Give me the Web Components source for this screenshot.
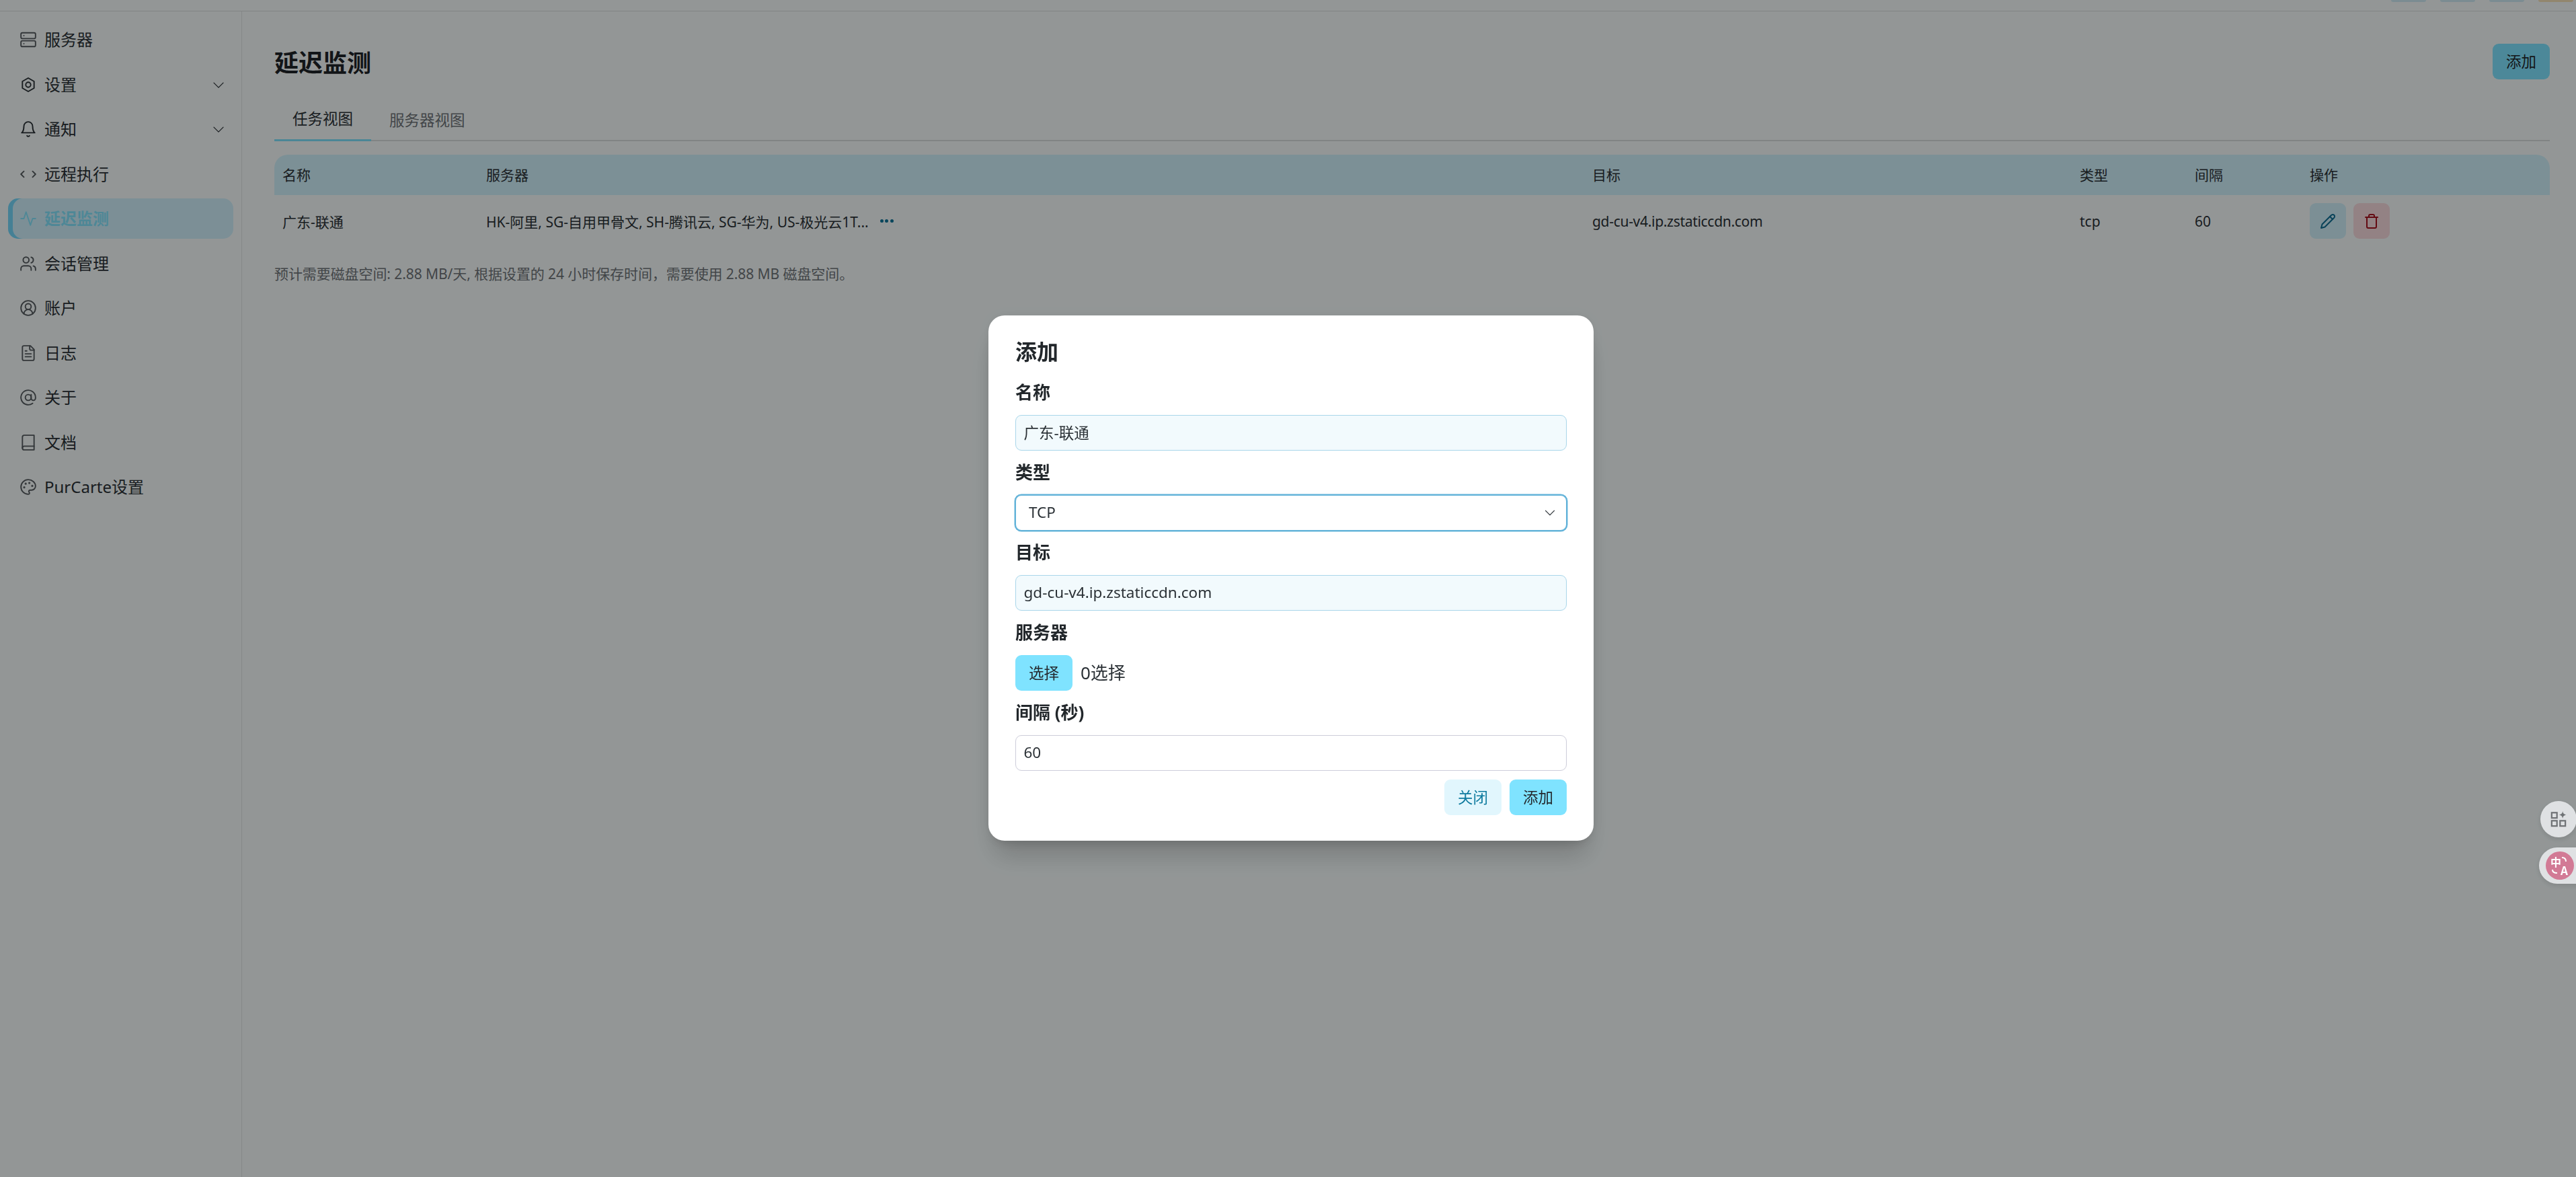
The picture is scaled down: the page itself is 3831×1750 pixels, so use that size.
<!DOCTYPE html>
<html lang="zh-CN">
<head>
<meta charset="UTF-8"/>
<title>延迟监测</title>
<style>
    html, body { margin: 0; height: 100%; }
    body {
        background: #f5fbfb;
        color: #2b3136;
        font-family: "Noto Sans", "Noto Sans CJK SC", sans-serif;
        overflow: hidden;
    }
</style>
</head>
<body>

<app-shell>
    <side-nav slot="nav">
        <nav-item icon="server">服务器</nav-item>
        <nav-item icon="settings" arrow>设置</nav-item>
        <nav-item icon="bell" arrow>通知</nav-item>
        <nav-item icon="code">远程执行</nav-item>
        <nav-item icon="activity" active>延迟监测</nav-item>
        <nav-item icon="users">会话管理</nav-item>
        <nav-item icon="user">账户</nav-item>
        <nav-item icon="file">日志</nav-item>
        <nav-item icon="at">关于</nav-item>
        <nav-item icon="book">文档</nav-item>
        <nav-item icon="palette">PurCarte设置</nav-item>
    </side-nav>
    <latency-page></latency-page>
</app-shell>

<modal-overlay>
    <add-dialog></add-dialog>
</modal-overlay>

<float-widgets></float-widgets>

<script>
    // Icons, mostly lucide shapes
    const ICONS = {
        server: '<rect x="2" y="2.5" width="20" height="8" rx="2"/><rect x="2" y="13.5" width="20" height="8" rx="2"/><path d="M6 6.5h.01M6 17.5h.01"/>',
        settings: '<path d="M12 2.8 20 7.4v9.2l-8 4.6-8-4.6V7.4z"/><circle cx="12" cy="12" r="3.4"/>',
        bell: '<path d="M6 8a6 6 0 0 1 12 0c0 7 3 9 3 9H3s3-2 3-9"/><path d="M10.3 21a1.94 1.94 0 0 0 3.4 0"/>',
        code: '<path d="m18 16 4-4-4-4"/><path d="m6 8-4 4 4 4"/>',
        activity: '<path d="M22 12h-4l-3 9L9 3l-3 9H2"/>',
        users: '<path d="M16 21v-2a4 4 0 0 0-4-4H6a4 4 0 0 0-4 4v2"/><circle cx="9" cy="7" r="4"/><path d="M22 21v-2a4 4 0 0 0-3-3.87"/><path d="M16 3.13a4 4 0 0 1 0 7.75"/>',
        user: '<circle cx="12" cy="12" r="10"/><circle cx="12" cy="10" r="4"/><path d="M18 20a6 6 0 0 0-12 0"/>',
        file: '<path d="M15 2H6a2 2 0 0 0-2 2v16a2 2 0 0 0 2 2h12a2 2 0 0 0 2-2V7Z"/><path d="M14 2v4a2 2 0 0 0 2 2h4"/><path d="M10 9H8M16 13H8M16 17H8"/>',
        at: '<circle cx="12" cy="12" r="4"/><path d="M16 8v5a3 3 0 0 0 6 0v-1a10 10 0 1 0-4 8"/>',
        book: '<path d="M4 19.5v-15A2.5 2.5 0 0 1 6.5 2H20v20H6.5a2.5 2.5 0 0 1-2.5-2.5z"/><path d="M4 19.5A2.5 2.5 0 0 1 6.5 17H20"/>',
        palette: '<path d="M12 2C6.5 2 2 6.5 2 12s4.5 10 10 10c.926 0 1.648-.746 1.648-1.688 0-.437-.18-.835-.437-1.125-.29-.289-.438-.652-.438-1.125a1.64 1.64 0 0 1 1.668-1.668h1.996c3.051 0 5.555-2.503 5.555-5.554C21.965 6.012 17.461 2 12 2z"/><circle cx="13.5" cy="6.5" r=".6"/><circle cx="17.5" cy="10.5" r=".6"/><circle cx="8.5" cy="7.5" r=".6"/><circle cx="6.5" cy="12.5" r=".6"/>',
        chevron: '<path d="m6 9.5 6 6 6-6"/>',
        pencil: '<path d="M17 3a2.85 2.83 0 1 1 4 4L7.5 20.5 2 22l1.5-5.5Z"/><path d="m15 5 4 4"/>',
        trash: '<path d="M3 6h18"/><path d="M19 6v14c0 1-1 2-2 2H7c-1 0-2-1-2-2V6"/><path d="M8 6V4c0-1 1-2 2-2h4c1 0 2 1 2 2v2"/>'
    };

    // every element here is just a shadow root filled from a string
    function generateElement(tagName, html) {
        window.customElements.define(tagName, class extends HTMLElement {
            constructor() {
                super();
                this.attachShadow({ mode: 'open' }).innerHTML = html;
            }
        });
    }

    window.customElements.define('ui-icon', class extends HTMLElement {
        constructor() {
            super();
            this.attachShadow({ mode: 'open' });
        }
        connectedCallback() {
            const size = this.getAttribute('size') || 26;
            const width = this.getAttribute('stroke') || 1.75;
            this.shadowRoot.innerHTML = `
                <style>:host { display: inline-flex; flex: none; } svg { display: block; }</style>
                <svg width="${size}" height="${size}" viewBox="0 0 24 24" fill="none" stroke="currentColor"
                     stroke-width="${width}" stroke-linecap="round" stroke-linejoin="round">${ICONS[this.getAttribute('name')]}</svg>`;
        }
    });

    generateElement('app-shell', `
        <style>
            :host { display: flex; flex-direction: column; height: 1750px; }
            .top {
                height: 17px; box-sizing: border-box; flex: none;
                border-bottom: 1.5px solid #d8dcdd;
                display: flex; justify-content: flex-end; gap: 21px; padding-right: 4px;
            }
            .chip { width: 52px; height: 3px; border-radius: 0 0 10px 10px; background: #cdeaf4; }
            .chip.user { background: #f3dfb8; }
            .body { flex: 1; display: flex; min-height: 0; }
        </style>
        <div class="top">
            <div class="chip"></div><div class="chip"></div><div class="chip"></div><div class="chip user"></div>
        </div>
        <div class="body">
            <slot name="nav"></slot>
            <slot></slot>
        </div>`);

    generateElement('side-nav', `
        <style>
            :host {
                display: flex; flex-direction: column; gap: 6.5px; flex: none;
                width: 360px; box-sizing: border-box;
                padding: 12px 12px 0 12px;
                border-right: 1.5px solid #dfe3e4;
            }
        </style>
        <slot></slot>`);

    window.customElements.define('nav-item', class extends HTMLElement {
        constructor() {
            super();
            this.attachShadow({ mode: 'open' });
        }
        connectedCallback() {
            const arrow = this.hasAttribute('arrow')
                ? '<ui-icon class="arrow" name="chevron" size="28" stroke="1.1"></ui-icon>' : '';
            this.shadowRoot.innerHTML = `
                <style>
                    :host {
                        display: flex; align-items: center; height: 60px; box-sizing: border-box;
                        padding: 0 8px 0 17px; gap: 11px; border-radius: 15px;
                        font-size: 24px; color: #2b3136;
                    }
                    :host([active]) {
                        background: #cfeffb; color: #82e2fb; font-weight: 700;
                        box-shadow: inset 7px 0 0 #74d6f8;
                    }
                    ui-icon { color: #555b5f; }
                    :host([active]) ui-icon { color: #82e2fb; }
                    :host([icon="settings"]) ui-icon, :host([icon="bell"]) ui-icon { color: #2b3136; }
                    .label { flex: 1; padding-bottom: 3px; }
                    ui-icon.arrow { color: #2b3136; }
                </style>
                <ui-icon name="${this.getAttribute('icon')}"></ui-icon>
                <span class="label"><slot></slot></span>
                ${arrow}`;
        }
    });

    generateElement('ui-button', `
        <style>
            :host {
                display: inline-flex; align-items: center; justify-content: center; flex: none;
                width: 85px; height: 53px; box-sizing: border-box; padding-bottom: 2px;
                border-radius: 9px; font-size: 22.5px; color: #24292d;
                background: #7fe3ff;
            }
            :host([soft]) { background: #e1f6fd; color: #0d7a9e; }
        </style>
        <slot></slot>`);

    generateElement('tab-bar', `
        <style>
            :host {
                display: flex; height: 62px; box-sizing: border-box; margin-top: 30px;
                border-bottom: 2px solid #d7dcdd;
            }
            .tab {
                display: flex; align-items: center; height: 62px; box-sizing: border-box;
                padding: 0 27px 4px; font-size: 22.5px; color: #6f7478;
            }
            .on { color: #2b3136; border-bottom: 3px solid #7ee0fb; }
        </style>
        <div class="tab on">任务视图</div>
        <div class="tab">服务器视图</div>`);

    generateElement('task-table', `
        <style>
            :host { display: block; margin-top: 20px; font-size: 21px; color: #2b3136; }
            table { width: 100%; border-collapse: collapse; table-layout: fixed; }
            th, td { padding: 0 12px; text-align: left; font-weight: 400; white-space: nowrap; }
            th { padding-bottom: 3px; }
            thead tr { height: 60px; background: #cff0fb; }
            th:first-child { border-top-left-radius: 20px; }
            th:last-child { border-top-right-radius: 20px; }
            tbody tr { height: 77px; }
            .target { letter-spacing: -.3px; }
            .servers { display: flex; align-items: center; gap: 17px; }
            .dots { display: flex; gap: 2.5px; }
            .dots i { width: 5px; height: 5px; border-radius: 50%; background: #10759a; }
            .acts { display: flex; gap: 11px; }
            .act {
                width: 54px; height: 53px; border-radius: 9px;
                display: flex; align-items: center; justify-content: center;
            }
            .edit { background: #cfeef8; color: #0f6f94; }
            .del { background: #f6d9dc; color: #a5121f; }
        </style>
        <table>
            <colgroup>
                <col style="width:303px"><col style="width:1645px"><col style="width:725px">
                <col style="width:171px"><col style="width:171px"><col>
            </colgroup>
            <thead>
                <tr><th>名称</th><th>服务器</th><th>目标</th><th>类型</th><th>间隔</th><th>操作</th></tr>
            </thead>
            <tbody>
                <tr>
                    <td>广东-联通</td>
                    <td><div class="servers">
                        <span>HK-阿里, SG-自用甲骨文, SH-腾讯云, SG-华为, US-极光云1T...</span>
                        <span class="dots"><i></i><i></i><i></i></span>
                    </div></td>
                    <td class="target">gd-cu-v4.ip.zstaticcdn.com</td>
                    <td>tcp</td>
                    <td>60</td>
                    <td><div class="acts">
                        <div class="act edit"><ui-icon name="pencil" size="24" stroke="2"></ui-icon></div>
                        <div class="act del"><ui-icon name="trash" size="24" stroke="2"></ui-icon></div>
                    </div></td>
                </tr>
            </tbody>
        </table>`);

    generateElement('latency-page', `
        <style>
            :host {
                display: block; flex: 1; min-width: 0;
                padding: 48px 39px 0 48px;
            }
            .head { display: flex; align-items: center; justify-content: space-between; height: 53px; }
            h1 { margin: 0; font-size: 36px; font-weight: 700; color: #1f2428; line-height: 53px; position: relative; top: 2px; }
            p { margin: 24px 0 0; font-size: 21px; line-height: 32px; color: #6f7478; letter-spacing: -.08px; }
        </style>
        <div class="head">
            <h1>延迟监测</h1>
            <ui-button>添加</ui-button>
        </div>
        <tab-bar></tab-bar>
        <task-table></task-table>
        <p>预计需要磁盘空间: 2.88 MB/天, 根据设置的 24 小时保存时间，需要使用 2.88 MB 磁盘空间。</p>`);

    generateElement('modal-overlay', `
        <style>
            :host {
                position: fixed; inset: 0; display: flex; justify-content: center; align-items: flex-start;
                padding: 469px 0 0 9px; box-sizing: border-box;
                background: rgba(0, 0, 0, .4);
            }
        </style>
        <slot></slot>`);

    window.customElements.define('field-label', class extends HTMLElement {
        constructor() {
            super();
            this.attachShadow({ mode: 'open' }).innerHTML = `
                <style>
                    :host { display: block; height: 36px; font-size: 26px; font-weight: 700; line-height: 34px; color: #22272b; }
                </style>
                <slot></slot>`;
        }
    });

    generateElement('text-box', `
        <style>
            :host {
                display: flex; align-items: center; height: 53px; box-sizing: border-box;
                padding: 0 11.5px 2px; border-radius: 9px; font-size: 22.5px; color: #2b3136;
                background: #fff; border: 1.5px solid #cdcdda;
            }
            :host([filled]) { background: #f2fafd; border-color: #a9d6ea; }
        </style>
        <slot></slot>`);

    generateElement('select-box', `
        <style>
            :host {
                display: flex; align-items: center; justify-content: space-between;
                height: 53px; box-sizing: border-box; padding: 0 11px 2px 19px;
                border-radius: 9px; font-size: 22.5px; color: #2b3136;
                background: #fff; border: 1.5px solid #63b3d9; box-shadow: 0 0 0 1.5px #63b3d9;
            }
            ui-icon { color: #3c4246; }
        </style>
        <slot></slot>
        <ui-icon name="chevron" size="26" stroke="1.1"></ui-icon>`);

    generateElement('add-dialog', `
        <style>
            :host {
                display: flex; flex-direction: column; width: 900px; height: 781px; box-sizing: border-box;
                padding: 34px 40px 0; border-radius: 24px; background: #fff;
                box-shadow: 0 30px 38px -8px rgba(0,0,0,.18), 0 12px 15px -8px rgba(0,0,0,.1), 0 0 24px rgba(0,0,0,.06);
            }
            h2 { margin: 0 0 23px; font-size: 32px; line-height: 40px; font-weight: 700; color: #22272b; }
            .stack { display: flex; flex-direction: column; gap: 15px; }
            .pick { display: flex; align-items: center; gap: 12px; font-size: 26px; color: #2b3136; }
            .pick span { padding-bottom: 3px; }
            .foot { display: flex; justify-content: flex-end; gap: 12px; margin-top: 13px; }
        </style>
        <h2>添加</h2>
        <div class="stack">
            <field-label>名称</field-label>
            <text-box filled>广东-联通</text-box>
            <field-label>类型</field-label>
            <select-box>TCP</select-box>
            <field-label>目标</field-label>
            <text-box filled>gd-cu-v4.ip.zstaticcdn.com</text-box>
            <field-label>服务器</field-label>
            <div class="pick"><ui-button>选择</ui-button><span>0选择</span></div>
            <field-label>间隔 (秒)</field-label>
            <text-box>60</text-box>
        </div>
        <div class="foot">
            <ui-button soft>关闭</ui-button>
            <ui-button>添加</ui-button>
        </div>`);

    // browser extension buttons, they sit above the dimmed layer
    generateElement('float-widgets', `
        <style>
            :host {
                position: fixed; right: 0; top: 1191px; width: 54px; height: 124px;
                display: block;
            }
            .a, .b { position: absolute; background: #dfe1e3; box-shadow: 0 3px 10px rgba(0,0,0,.12); }
            .a { left: 1px; top: 0; width: 54px; height: 54px; border-radius: 50%; display: flex; align-items: center; justify-content: center; }
            .b { left: -1px; top: 69px; width: 70px; height: 54px; border-radius: 27px 0 0 27px; }
            .disc {
                position: absolute; left: 10px; top: 6px; width: 42px; height: 42px; border-radius: 50%;
                background: #d27a95; color: #fff; font-family: "Noto Sans CJK SC", sans-serif; font-weight: 700;
            }
            .disc span { position: absolute; line-height: 1; }
            .zh { left: 7px; top: 7px; font-size: 16px; }
            .la { left: 22px; top: 19px; font-size: 17px; }
        </style>
        <div class="a">
            <svg width="24" height="24" viewBox="0 0 26 26" fill="none" stroke="#6f7275" stroke-width="2.4">
                <rect x="2" y="2.5" width="8.5" height="8.5"/><rect x="2" y="15.5" width="8.5" height="8.5"/><rect x="15.5" y="15.5" width="8.5" height="8.5"/>
                <path d="M19.7 0c.6 3.6 1.8 5 6 6-4.2 1-5.4 2.4-6 6-.6-3.6-1.8-5-6-6 4.2-1 5.4-2.4 6-6z" fill="#6f7275" stroke="none"/>
            </svg>
        </div>
        <div class="b">
            <div class="disc">
                <span class="zh">中</span><span class="la">A</span>
                <svg width="42" height="42" viewBox="0 0 42 42" fill="none" stroke="#fff" stroke-width="2" style="position:absolute;left:0;top:0">
                    <path d="M24 9c4 0 6 2 6 6M10 27c0 3 2 5 7 5"/>
                </svg>
            </div>
        </div>`);
</script>
</body>
</html>
